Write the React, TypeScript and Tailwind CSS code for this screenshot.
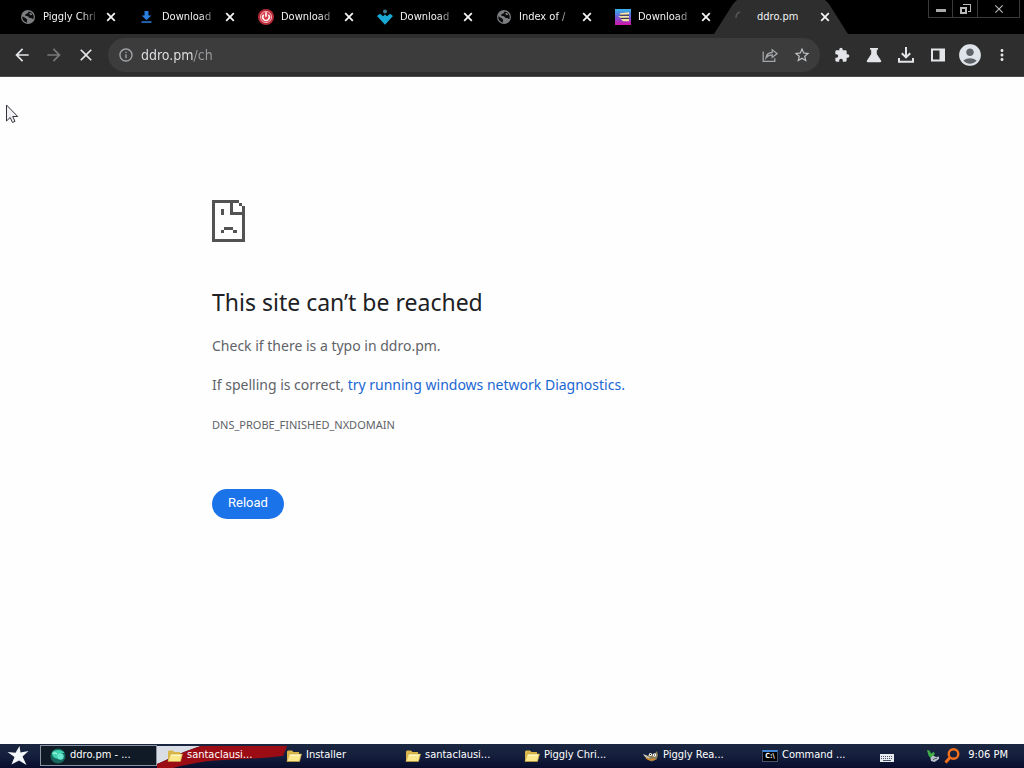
import type { ReactNode } from "react";
import {
  MdAccountCircle,
  MdArrowBack,
  MdArrowForward,
  MdClose,
  MdExtension,
  MdInfoOutline,
  MdMoreVert,
  MdStarBorder,
} from "react-icons/md";

function GlobeIcon() {
  return (
    <svg viewBox="0 0 16 16" className="size-4">
      <circle cx="8" cy="8" r="7" fill="#7c7e80" />
      <path
        d="M8.500 2.400L7.800 4.200 5.600 5l-.4 1.700L8 7.200l1.200 1.600 2.600.5 1.500 1A5.800 5.800 0 0 0 8.500 2.400z"
        fill="#0c0c0c"
      />
      <path d="M2.300 7.200l3.400 2 1.600 1.600-.6 1.400.6 1.600A5.900 5.900 0 0 1 2.300 7.200z" fill="#0c0c0c" />
      <path d="M9 4.500l1.800-.8 1.500 2-1.800.6z" fill="#7c7e80" />
    </svg>
  );
}

function CloseIcon() {
  return (
    <svg viewBox="0 0 12 12" className="size-3" stroke="#f4f4f4" strokeWidth="1.800">
      <path d="M2.200 2.200l7.600 7.600M9.800 2.200L2.200 9.800" />
    </svg>
  );
}

function PowerIcon() {
  return (
    <svg viewBox="0 0 16 16" className="size-4">
      <circle cx="8" cy="8" r="8" fill="#b92a38" />
      <circle cx="8" cy="8" r="5.6" fill="#d8404c" stroke="#f0a9ae" strokeWidth="1" />
      <path d="M5.6 5.8a3.3 3.3 0 1 0 4.8 0" fill="none" stroke="#fff" strokeWidth="1.5" />
      <path d="M8 3.2v4.6" stroke="#fff" strokeWidth="1.6" />
    </svg>
  );
}

function DownArrowIcon() {
  return (
    <svg viewBox="0 0 16 16" className="size-4" fill="#2b7de0">
      <path d="M5.5 2h4v4.500h2.800L7.500 11.200 2.700 6.500h2.800z" />
      <path d="M2.500 12.300h10v1.500h-10z" />
    </svg>
  );
}

function DiamondIcon() {
  return (
    <svg viewBox="0 0 16 16" className="size-4" fill="#19a9d6">
      <circle cx="8" cy="2.400" r="2" fill="#3d7f92" />
      <path d="M0 7l3-2.200L6 7.200l2-1.700 2 1.700 3-2.400L16 7l-8 8.800z" />
    </svg>
  );
}

function StackIcon() {
  return (
    <svg viewBox="0 0 16 16" className="size-4">
      <defs>
        <linearGradient id="stack" x1="0" y1="0" x2="0" y2="1">
          <stop offset="0" stopColor="#35b6ea" />
          <stop offset="0.5" stopColor="#6d5bd8" />
          <stop offset="1" stopColor="#d613a8" />
        </linearGradient>
      </defs>
      <path d="M0 0h16v16H0z" fill="url(#stack)" />
      <path d="M5 4.200l9-1v2.200l-9 .8zM3 7.200l11-.4v2L6 9zM6 10h8v2.200H8z" fill="#f3e6a0" />
      <path d="M5 6.200h9M6 9.400h8" stroke="#2a2340" strokeWidth="0.9" />
    </svg>
  );
}

function SpinnerIcon() {
  return (
    <svg viewBox="0 0 16 16" className="size-4">
      <path d="M2 9a6 6 0 0 1 4-6" fill="none" stroke="#55585c" strokeWidth="1.400" />
    </svg>
  );
}

function ShareIcon() {
  return (
    <svg viewBox="0 0 16 16" className="size-4" fill="none" stroke="#a3a6aa" strokeWidth="1.300">
      <path d="M1.200 4.500v9.800h11.600v-3" />
      <path d="M4 10.800c.6-3.600 2.800-5.200 6.200-5.300V2.800L15 6.600l-4.800 3.800V7.900C7.500 7.900 5.600 8.800 4 10.800z" />
    </svg>
  );
}

function FlaskIcon() {
  return (
    <svg viewBox="0 0 16 16" className="size-4" fill="#e3e5e8">
      <path d="M4 1h8v1.800h-1.200v4.200L15 13.600c.6 1 .1 1.600-.8 1.600H1.800c-.9 0-1.400-.6-.8-1.600L5.200 7V2.800H4z" />
    </svg>
  );
}

function DownloadIcon() {
  return (
    <svg viewBox="0 0 16 16" className="size-4" fill="none" stroke="#e3e5e8" strokeWidth="2">
      <path d="M8 0v10M3.800 6.200L8 10.400l4.200-4.200M1 11v3.800h14V11" />
    </svg>
  );
}

function SidePanelIcon() {
  return (
    <svg viewBox="0 0 16 16" className="size-4">
      <path d="M1 1.500h14v13H1zM3 3.500v9h6.500v-9z" fill="#e3e5e8" fillRule="evenodd" />
    </svg>
  );
}

function SadPageIcon() {
  return (
    <svg viewBox="0 0 33 42" className="h-[42px] w-[33px]" fill="#535353" shapeRendering="crispEdges">
      <path d="M0 0h27v3H3v36h27V6h3v36H0z" />
      <path d="M18 3h3v9h9v3H18zM27 3h3v3h-3z" />
      <path d="M9 9h3v6H9zM12 27h9v3h-9zM9 30h3v3H9zM21 30h4v3h-4z" />
    </svg>
  );
}

function FolderIcon() {
  return (
    <svg viewBox="0 0 16 16" className="size-4">
      <path d="M1 13.500V3.500l1-1h4l1.500 1.500H13v3" fill="#d9b64a" />
      <path d="M1 13.500L3.400 6H15.500l-2 7.500z" fill="#fbe88a" stroke="#c9a43c" strokeWidth="0.6" />
      <path d="M4 7.200h10" stroke="#fffbd8" />
    </svg>
  );
}

function BrowserIcon() {
  return (
    <svg viewBox="0 0 16 16" className="size-4">
      <circle cx="8" cy="8" r="7.500" fill="#16685f" />
      <path d="M2 4.500C6 1 12 1.500 14.500 5 10 4.500 8 7 9 10.500 5 11 2 9 2 4.500z" fill="#3fd3b2" />
      <circle cx="10.500" cy="8.500" r="3.200" fill="#68e6cf" />
      <path d="M3 5.500c1.500-.8 3-.6 4 .5" stroke="#d9fff5" fill="none" />
    </svg>
  );
}

function FoxIcon() {
  return (
    <svg viewBox="0 0 16 16" className="size-4">
      <path d="M5 7l2-1 4 .5 3-3.500 1 4.500-1.500 4L9 13.500 5 11.500z" fill="#8a7f5e" />
      <path d="M0 6l4 1.500L7 10l-2 1-3-2z" fill="#c9c9bf" />
      <circle cx="7.500" cy="6.500" r="1.500" fill="#fff" />
      <circle cx="11.500" cy="7" r="1.700" fill="#fff" />
      <path d="M7.500 6v1M11.500 6.500v1" stroke="#111" />
      <path d="M3 10l4 2 5-1" stroke="#d58a25" strokeWidth="1.400" fill="none" />
    </svg>
  );
}

function CommandIcon() {
  return (
    <span className="flex h-3 w-4 items-center justify-center border border-t-2 border-[#44536b] border-t-[#3f87d6] bg-black text-[7px] leading-none font-bold text-white">
      C:\
    </span>
  );
}

function StarIcon() {
  return (
    <svg viewBox="0 0 22 20" className="h-5 w-[22px]" fill="#f4f7fb">
      <path d="M12.500 0l1 6.500L21.500 5l-6 5.500 4 8.500-7.500-4.600L4.500 18.500 7.500 11 .5 6l8 .8z" />
    </svg>
  );
}

function KeyboardIcon() {
  return (
    <svg viewBox="0 0 14 8" className="h-2 w-3.5" shapeRendering="crispEdges">
      <path d="M0 0h14v8H0z" fill="#e9ecef" />
      <path d="M1 2.500h12M1 4.500h12" stroke="#4a5568" strokeDasharray="1 1" />
      <path d="M3 6.500h8" stroke="#4a5568" />
    </svg>
  );
}

function PlugIcon() {
  return (
    <svg viewBox="0 0 14 14" className="size-3.5">
      <path d="M1 1l2.500.5L5 4.500 7.500 3l1.500 1.500L7 7.500l-2 2-2.500-3z" fill="#3fae48" />
      <path d="M4.500 9L7 6.500l3 1.500 3-.5v2.500L8.500 13 5 12z" fill="#b9c2c8" />
      <path d="M7 10.500l4-1.500" stroke="#4d575e" />
    </svg>
  );
}

function SearchIcon() {
  return (
    <svg viewBox="0 0 16 16" className="size-4" fill="none" stroke="#f2701d">
      <circle cx="9.500" cy="6" r="4.800" strokeWidth="2.400" />
      <path d="M6 9.500L1.500 14.500" strokeWidth="3" />
    </svg>
  );
}

const tabs: { title: string; icon: ReactNode }[] = [
  { title: "Piggly Chri", icon: <GlobeIcon /> },
  { title: "Download", icon: <DownArrowIcon /> },
  { title: "Download", icon: <PowerIcon /> },
  { title: "Download", icon: <DiamondIcon /> },
  { title: "Index of /", icon: <GlobeIcon /> },
  { title: "Download", icon: <StackIcon /> },
];

const tasks: { title: string; icon: ReactNode }[] = [
  { title: "santaclausi...", icon: <FolderIcon /> },
  { title: "Installer", icon: <FolderIcon /> },
  { title: "santaclausi...", icon: <FolderIcon /> },
  { title: "Piggly Chri...", icon: <FolderIcon /> },
  { title: "Piggly Rea...", icon: <FoxIcon /> },
  { title: "Command ...", icon: <CommandIcon /> },
];

function TabStrip() {
  return (
    <div className="flex h-[34px] justify-between bg-black text-[11px] text-[#f1f3f4]">
      <div role="tablist" className="flex">
        {tabs.map((tab, i) => (
          <div key={i} className="flex w-[119px] items-center pl-5">
            <button role="tab" className="flex items-center gap-[7px]">
              {tab.icon}
              <span className="w-[54px] text-left whitespace-nowrap [mask-image:linear-gradient(90deg,#000_70%,#0003)]">
                {tab.title}
              </span>
            </button>
            <button aria-label="Close tab" className="ml-2">
              <CloseIcon />
            </button>
          </div>
        ))}
        <div className="flex w-[134px] items-center bg-[#2e2e2e] pl-5 [clip-path:polygon(0_100%,19px_4px,23px_0,111px_0,115px_4px,100%_100%)]">
          <button role="tab" aria-selected="true" className="flex items-center gap-[7px]">
            <SpinnerIcon />
            <span className="w-[54px] text-left">ddro.pm</span>
          </button>
          <button aria-label="Close tab" className="ml-2">
            <CloseIcon />
          </button>
        </div>
      </div>
      <div className="mr-1 flex h-[18px] border border-t-0 border-[#3a3a3a] text-[#b9b9b9]">
        <button aria-label="Minimize" className="flex w-6 items-center justify-center border-r border-[#3a3a3a]">
          <span className="mt-1 h-[3px] w-2.5 bg-[#a9a9a9]" />
        </button>
        <button aria-label="Restore" className="flex w-[25px] items-center justify-center border-r border-[#3a3a3a]">
          <svg viewBox="0 0 12 12" className="size-3" fill="none" stroke="currentColor" shapeRendering="crispEdges">
            <path d="M4 1.500h7v7H9" />
            <path d="M2 5h5v5H2z" strokeWidth="2" />
          </svg>
        </button>
        <button aria-label="Close window" className="flex w-[41px] items-center justify-center">
          <MdClose className="size-3.5" />
        </button>
      </div>
    </div>
  );
}

function ToolButton({ label, children }: { label: string; children: ReactNode }) {
  return (
    <button aria-label={label} className="flex size-8 shrink-0 items-center justify-center">
      {children}
    </button>
  );
}

function Toolbar() {
  return (
    <div className="flex h-[43px] items-center border-b border-[#4a4a4a] bg-[#2e2e2e] px-1.5 text-[#e3e5e8]">
      <ToolButton label="Back">
        <MdArrowBack className="size-5" />
      </ToolButton>
      <ToolButton label="Forward">
        <MdArrowForward className="size-5 text-[#77797c]" />
      </ToolButton>
      <ToolButton label="Stop">
        <MdClose className="size-5" />
      </ToolButton>
      <div className="mx-1.5 flex h-[34px] flex-1 items-center rounded-full bg-[#3c3c3c] pr-0.5 pl-2.5 text-[#a3a6aa]">
        <MdInfoOutline className="mr-[7px] size-4" />
        <input
          aria-label="Address"
          defaultValue="ddro.pm/ch"
          className="min-w-0 flex-1 bg-[linear-gradient(90deg,#e3e5e8_53px,#9a9da1_53px)] bg-clip-text text-sm text-transparent outline-none"
        />
        <ToolButton label="Share">
          <ShareIcon />
        </ToolButton>
        <ToolButton label="Bookmark">
          <MdStarBorder className="size-[18px] text-[#bfc2c5]" />
        </ToolButton>
      </div>
      <ToolButton label="Extensions">
        <MdExtension className="size-4" />
      </ToolButton>
      <ToolButton label="Labs">
        <FlaskIcon />
      </ToolButton>
      <ToolButton label="Downloads">
        <DownloadIcon />
      </ToolButton>
      <ToolButton label="Side panel">
        <SidePanelIcon />
      </ToolButton>
      <ToolButton label="Profile">
        <span className="flex size-[22px] items-center justify-center rounded-full bg-[#5f6368]">
          <MdAccountCircle className="size-[26px] shrink-0 text-[#dfe3ea]" />
        </span>
      </ToolButton>
      <ToolButton label="Menu">
        <MdMoreVert className="size-[18px]" />
      </ToolButton>
    </div>
  );
}

function ErrorPage() {
  return (
    <main className="relative flex-1 bg-[#fefefe] font-['Noto_Sans',sans-serif]">
      <div className="mx-auto max-w-[600px] pt-[123px] text-sm leading-5 text-[#5f6368]">
        <SadPageIcon />
        <h1 className="mt-11 text-[23px] leading-8 text-[#202124]">This site can’t be reached</h1>
        <p className="mt-[18px]">Check if there is a typo in ddro.pm.</p>
        <p className="mt-[19px]">
          If spelling is correct,{" "}
          <a href="#diagnostics" className="text-[#1967d2]">
            try running windows network Diagnostics.
          </a>
        </p>
        <p className="mt-5 text-[11px] leading-5">DNS_PROBE_FINISHED_NXDOMAIN</p>
        <button className="mt-[54px] h-[30px] rounded-full bg-[#1a73e8] px-4 pb-0.5 font-['Roboto',sans-serif] text-[13px] text-white">
          Reload
        </button>
      </div>
      <svg viewBox="0 0 14 20" className="absolute top-[27px] left-[5px] h-5 w-3.5">
        <path
          d="M1.500 1v16l3.700-3.500 2.300 5 2.500-1.200-2.300-4.800h5z"
          fill="#f1f1f3"
          stroke="#33333b"
        />
      </svg>
    </main>
  );
}

function Taskbar() {
  return (
    <footer className="flex h-6 items-center bg-linear-to-b from-[#1b2740] via-[#151f3d] to-[#080c2c] pb-px text-[11px] text-white">
      <button aria-label="Start" className="flex w-10 justify-center pr-1">
        <StarIcon />
      </button>
      <button className="flex h-[21px] w-[117px] items-center gap-1 border border-[#8993a0] bg-[#101a26] pl-[9px]">
        <BrowserIcon />
        ddro.pm - ...
      </button>
      <div className="relative flex h-full items-center">
        <svg viewBox="0 0 130 22" className="absolute top-0.5 left-0 h-[22px] w-[130px]">
          <path d="M0 0h44C30 4 14 12 0 18z" fill="#d9dde6" />
          <path d="M44 0h86l-4 10c-40 5-70 1-110 12H0v-4C14 12 30 4 44 0z" fill="#9c0c14" />
        </svg>
        {tasks.map((task, i) => (
          <button key={i} className="relative flex w-[119px] items-center gap-1 pl-2.5">
            {task.icon}
            {task.title}
          </button>
        ))}
      </div>
      <div className="ml-auto flex items-center pr-4">
        <button aria-label="Keyboard" className="mt-1 mr-8">
          <KeyboardIcon />
        </button>
        <PlugIcon />
        <span className="mr-2 ml-1">
          <SearchIcon />
        </span>
        <time>9:06 PM</time>
      </div>
    </footer>
  );
}

export default function App() {
  return (
    <div className="flex h-screen flex-col overflow-hidden font-['DejaVu_Sans_Condensed','DejaVu_Sans',sans-serif]">
      <TabStrip />
      <Toolbar />
      <ErrorPage />
      <Taskbar />
    </div>
  );
}
